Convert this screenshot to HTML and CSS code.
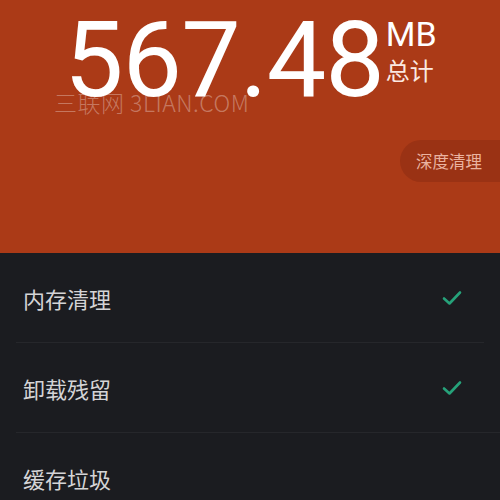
FILE: index.html
```html
<!DOCTYPE html>
<html lang="zh-CN">
  <head>
    <meta charset="UTF-8" />
    <meta name="viewport" content="width=device-width, initial-scale=1.0" />
    <title>清理</title>
    <link rel="stylesheet" href="styles.css">
  </head>
  <body>
    <div class="hero">
      <div class="total">
        <span class="num">567.48</span>
        <div class="unit">
          <span class="mb">MB</span>
          <span class="label">总计</span>
        </div>
      </div>
      <div class="mark">三联网 3LIAN.COM</div>
      <a class="deep" href="javascript:;">深度清理</a>
    </div>
    <ul class="list">
      <li class="row">
        <span>内存清理</span>
        <svg class="check" width="20" height="16" viewBox="0 0 20 16"><path d="M2 8.5 L7.5 13.5 L18 2.5" fill="none" stroke="#26a27a" stroke-width="2.6" stroke-linecap="round" stroke-linejoin="round"/></svg>
      </li>
      <li class="row row-wide">
        <span>卸载残留</span>
        <svg class="check" width="20" height="16" viewBox="0 0 20 16"><path d="M2 8.5 L7.5 13.5 L18 2.5" fill="none" stroke="#26a27a" stroke-width="2.6" stroke-linecap="round" stroke-linejoin="round"/></svg>
      </li>
      <li class="row">
        <span>缓存垃圾</span>
      </li>
    </ul>
  </body>
</html>
```

FILE: styles.css
```css
* {
  margin: 0;
  padding: 0;
}
body {
  width: 500px;
  height: 500px;
  overflow: hidden;
  background-color: #1b1c20;
  font-family: Roboto, "Noto Sans CJK SC", sans-serif;
}
.hero {
  height: 253px;
  background-color: #ab3a17;
  position: relative;
  display: flex;
  flex-direction: column;
}
.total {
  display: flex;
  align-items: flex-start;
  margin: 6px 0 0 64px;
  color: #fff;
}
.num {
  font-size: 106px;
  line-height: 108px;
  letter-spacing: -1px;
}
.unit {
  display: flex;
  flex-direction: column;
  margin-left: 2px;
  padding-top: 8px;
}
.mb {
  font-size: 34px;
  line-height: 40px;
}
.label {
  font-family: "Noto Sans CJK SC", sans-serif;
  font-size: 24px;
  line-height: 32px;
  color: #fbe9e2;
}
.mark {
  position: absolute;
  left: 54px;
  top: 85px;
  font-family: "Noto Sans CJK SC", "Open Sans", sans-serif;
  font-weight: 300;
  font-size: 23px;
  color: rgba(255, 255, 255, 0.33);
  letter-spacing: 0.5px;
}
.deep {
  align-self: flex-end;
  margin-top: 26px;
  width: 100px;
  height: 42px;
  line-height: 42px;
  padding-left: 16px;
  box-sizing: border-box;
  border-radius: 21px 0 0 21px;
  background-color: #9a3214;
  color: #eab3a0;
  font-family: "Noto Sans CJK SC", sans-serif;
  font-size: 16.5px;
  text-decoration: none;
}
.list {
  list-style: none;
}
.row {
  height: 89px;
  margin: 0 16px;
  padding: 0 22px 0 7px;
  border-bottom: 1px solid #26272b;
  display: flex;
  align-items: center;
  justify-content: space-between;
  color: #d4d4d6;
  font-family: "Noto Sans CJK SC", sans-serif;
  font-size: 22px;
}
.row-wide {
  margin-right: 0;
  padding-right: 38px;
}
```
